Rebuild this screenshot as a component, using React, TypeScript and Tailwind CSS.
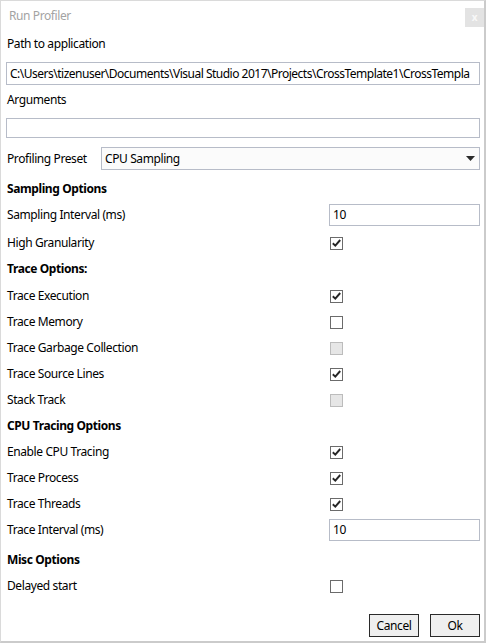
import React from "react";

function Check({ checked, disabled }: { checked?: boolean; disabled?: boolean }) {
  return (
    <div
      className={
        "w-[13px] h-[13px] border flex items-center justify-center " +
        (disabled ? "border-[#bcbcbc] bg-[#e6e6e6]" : "border-[#6b6b6b] bg-white")
      }
    >
      {checked && (
        <svg width="9" height="8" viewBox="0 0 9 8">
          <path d="M0.8 4.2 L3.3 6.6 L8.2 1" stroke="#262626" strokeWidth="1.9" fill="none" />
        </svg>
      )}
    </div>
  );
}

function Heading({ children }: { children: React.ReactNode }) {
  return <div className="h-[26px] flex items-center pl-px font-bold">{children}</div>;
}

function CheckRow({ label, checked, disabled }: { label: string; checked?: boolean; disabled?: boolean }) {
  return (
    <div className="h-[26px] grid grid-cols-[324px_1fr] items-center">
      <span className="pl-px">{label}</span>
      <Check checked={checked} disabled={disabled} />
    </div>
  );
}

function ValueRow({ label, value }: { label: string; value: string }) {
  return (
    <div className="h-[26px] grid grid-cols-[323px_1fr] items-center">
      <span className="pl-px">{label}</span>
      <div className="h-[22px] border border-[#b7bcc8] bg-white flex items-center pl-[3px]">{value}</div>
    </div>
  );
}

export default function App() {
  return (
    <div
      className="w-[486px] h-[643px] bg-white border-l border-t border-[#dadada] border-r-2 border-r-[#cbcbcb] border-b-2 border-b-[#cbcbcb] text-[12px] tracking-[-0.4px] text-black flex flex-col"
      style={{ fontFamily: '"Noto Sans", "Segoe UI", sans-serif' }}
    >
      <div className="h-[32px] flex items-start justify-between">
        <span className="pl-[8px] pt-[6px] text-[#a3a3a3]">Run Profiler</span>
        <div className="mt-[7px] w-[19px] h-[19px] bg-[#e3e3e3] text-[#f8f8f8] text-[10px] font-bold flex items-center justify-center">
          x
        </div>
      </div>

      <div className="pl-[5px] pr-[4px] flex flex-col">
        <div className="h-[22px] flex items-center pl-px">Path to application</div>
        <div className="mt-[7px] h-[23px] border border-[#b7bcc8] flex items-center pl-[3px] overflow-hidden whitespace-nowrap tracking-[-0.5px]">
          C:\Users\tizenuser\Documents\Visual Studio 2017\Projects\CrossTemplate1\CrossTempla
        </div>
        <div className="mt-[4px] h-[22px] flex items-center pl-px">Arguments</div>
        <div className="mt-[7px] h-[20px] border border-[#b7bcc8]" />

        <div className="mt-[9px] h-[23px] flex items-center">
          <span className="w-[95px] pl-px">Profiling Preset</span>
          <div className="flex-1 h-[23px] border border-[#b7bcc8] bg-[#fbfbfb] flex items-center justify-between pl-[3px] pr-[4px]">
            <span>CPU Sampling</span>
            <svg width="9" height="5" viewBox="0 0 9 5">
              <path d="M0 0 H9 L4.5 5 Z" fill="#2b2b2b" />
            </svg>
          </div>
        </div>

        <div className="mt-[6px]">
          <Heading>Sampling Options</Heading>
        </div>
        <ValueRow label="Sampling Interval (ms)" value="10" />
        <div className="mt-[2px]">
          <CheckRow label="High Granularity" checked />
        </div>

        <Heading>Trace Options:</Heading>
        <div className="mt-px">
          <CheckRow label="Trace Execution" checked />
        </div>
        <CheckRow label="Trace Memory" />
        <CheckRow label="Trace Garbage Collection" disabled />
        <CheckRow label="Trace Source Lines" checked />
        <CheckRow label="Stack Track" disabled />

        <Heading>CPU Tracing Options</Heading>
        <CheckRow label="Enable CPU Tracing" checked />
        <CheckRow label="Trace Process" checked />
        <CheckRow label="Trace Threads" checked />
        <ValueRow label="Trace Interval (ms)" value="10" />

        <div className="mt-[4px]">
          <Heading>Misc Options</Heading>
        </div>
        <CheckRow label="Delayed start" />

        <div className="mt-[15px] flex justify-end gap-[11px]">
          <button className="w-[50px] h-[23px] border border-[#2a2a2a] bg-[#efefef]">Cancel</button>
          <button className="w-[50px] h-[23px] border border-[#2a2a2a] bg-[#efefef]">Ok</button>
        </div>
      </div>
    </div>
  );
}
